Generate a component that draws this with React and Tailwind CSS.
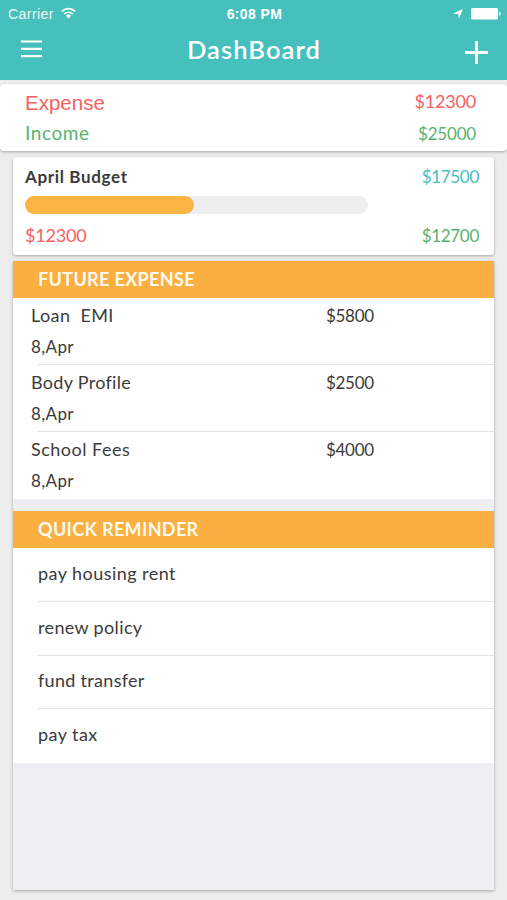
const expenses = [
  { name: "Loan  EMI", date: "8,Apr", amount: "$5800", spacing: "tracking-[0.4px]" },
  { name: "Body Profile", date: "8,Apr", amount: "$2500", spacing: "tracking-[0.3px]" },
  { name: "School Fees", date: "8,Apr", amount: "$4000", spacing: "tracking-[0.5px]" },
];

const reminders = [
  { text: "pay housing rent", spacing: "tracking-[0.45px]" },
  { text: "renew policy", spacing: "tracking-[0.35px]" },
  { text: "fund transfer", spacing: "tracking-[0.3px]" },
  { text: "pay tax", spacing: "tracking-[0.45px]" },
];

function StatusBar() {
  return (
    <div className="grid h-7 grid-cols-3 items-center pl-2 pr-1.5 font-['Liberation_Sans',sans-serif] text-[13px] leading-7">
      <div className="flex items-center gap-[7px]">
        <span className="text-[14px] tracking-[0.45px] text-white/90">Carrier</span>
        <svg className="-mt-0.5" width="15" height="12" viewBox="0 0 15 12" fill="none" stroke="white" strokeWidth="1.7">
          <path d="M0.8 4.4a9.5 9.5 0 0 1 13.4 0" />
          <path d="M3.2 7a6.1 6.1 0 0 1 8.6 0" />
          <path d="M5 8.8a3.5 3.5 0 0 1 5 0L7.5 11.4z" fill="white" stroke="none" />
        </svg>
      </div>
      <span className="text-center text-[14px] font-bold tracking-[0.4px]">6:08 PM</span>
      <div className="flex items-center justify-end gap-2">
        <svg width="10" height="10" viewBox="0 0 10 10" fill="white">
          <path d="M10 0L5.8 9.8L5.3 4.9L0 4.6z" />
        </svg>
        <svg width="30" height="12" viewBox="0 0 30 12" fill="white">
          <rect x="0" y="0" width="27" height="11.5" rx="1.5" />
          <path d="M28 3.8c2.2 0.5 2.2 3.5 0 4z" />
        </svg>
      </div>
    </div>
  );
}

function Header() {
  return (
    <header className="h-[80px] bg-[#46c0bd] text-white">
      <StatusBar />
      <div className="flex h-[44px] items-center justify-between pl-[21px] pr-[19px]">
        <svg className="-mt-0.5" width="22" height="20" viewBox="0 0 22 20" fill="none" stroke="white" strokeWidth="2.2">
          <path d="M0 2.5h21M0 9.8h21M0 17.2h21" />
        </svg>
        <h1 className="-mt-0.5 font-['Lato',sans-serif] text-[25.5px] font-semibold leading-[44px] tracking-[1.1px]">
          DashBoard
        </h1>
        <svg className="mt-1" width="23" height="23" viewBox="0 0 23 23" fill="none" stroke="white" strokeWidth="3">
          <path d="M0 11.5h23M11.5 0v23" />
        </svg>
      </div>
    </header>
  );
}

function Summary() {
  return (
    <section className="mt-1 flex h-[67px] justify-between rounded-[4px] bg-white pl-[25px] pr-[31px] pt-1 shadow-[0_1px_3px_rgba(0,0,0,0.3)]">
      <div>
        <p className="font-['Liberation_Sans',sans-serif] text-[20.5px] leading-[30px] text-[#f75f60]">Expense</p>
        <p className="text-[19px] leading-[30px] tracking-[0.6px] text-[#57b36f]">Income</p>
      </div>
      <div className="text-right">
        <p className="text-[18px] leading-[26px] tracking-[-0.2px] text-[#f75f60]">$12300</p>
        <p className="pt-1.5 text-[17px] leading-[28px] tracking-[-0.2px] text-[#57b36f]">$25000</p>
      </div>
    </section>
  );
}

function Budget() {
  return (
    <section className="mx-[13px] mt-1.5 h-[98px] rounded-[3px] bg-white pl-3 pr-[15px] pt-[5px] shadow-[0_1px_3px_rgba(0,0,0,0.3)]">
      <div className="flex justify-between text-[17px] leading-[30px]">
        <h2 className="font-bold tracking-[0.65px] text-[#3a3a3a]">April Budget</h2>
        <span className="tracking-[-0.3px] text-[#46c0bd]">$17500</span>
      </div>
      <div className="mt-1 h-[18px] w-[343px] rounded-full bg-[#eeeeee]">
        <div className="h-full w-[169px] rounded-full bg-[#fcb444]" />
      </div>
      <div className="mt-[6px] flex justify-between text-[17px] leading-[30px]">
        <span className="text-[18px] tracking-[-0.2px] text-[#f75f60]">$12300</span>
        <span className="pt-px tracking-[-0.3px] text-[#57b36f]">$12700</span>
      </div>
    </section>
  );
}

function SectionTitle({ children }) {
  return (
    <h2 className="h-[37px] bg-[#f9af41] pl-[25px] text-[18px] font-bold leading-[37px] tracking-[0.35px] text-[#fffaf0]">
      {children}
    </h2>
  );
}

function App() {
  return (
    <div className="flex h-[900px] w-[507px] flex-col overflow-hidden bg-[#ededed] font-['Lato',sans-serif] text-[#3b3b3b]">
      <Header />
      <Summary />
      <Budget />

      <section className="mx-[13px] mt-1.5 h-[629px] bg-[#eeeef3] shadow-[0_1px_3px_rgba(0,0,0,0.3)]">
        <SectionTitle>FUTURE EXPENSE</SectionTitle>
        <ul className="bg-white">
          {expenses.map((item, i) => (
            <li key={item.name} className="h-[67px]">
              <div className="flex h-[66px] pl-[18px] pt-[2px] text-[18px] leading-[31px]">
                <div className="w-[295px] whitespace-pre">
                  <p className={item.spacing}>{item.name}</p>
                  <p className="text-[17px] tracking-[0.4px]">{item.date}</p>
                </div>
                <span className="text-[17px] tracking-[-0.3px]">{item.amount}</span>
              </div>
              {i < expenses.length - 1 && <div className="ml-6 h-px bg-[#e3e3e5]" />}
            </li>
          ))}
        </ul>

        <div className="h-3" />

        <SectionTitle>QUICK REMINDER</SectionTitle>
        <ul className="bg-white">
          {reminders.map((item, i) => (
            <li key={item.text} className="h-[53.7px] pl-6">
              <p className={`h-[53px] pl-px text-[18px] leading-[51px] ${item.spacing}`}>{item.text}</p>
              {i < reminders.length - 1 && <div className="h-px bg-[#e3e3e5]" />}
            </li>
          ))}
        </ul>
      </section>
    </div>
  );
}

export default App;
